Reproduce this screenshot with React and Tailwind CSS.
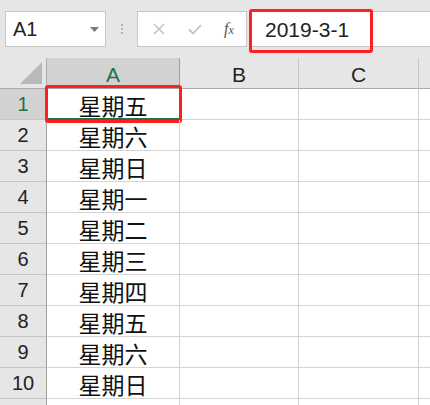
const rows = ['星期五', '星期六', '星期日', '星期一', '星期二', '星期三', '星期四', '星期五', '星期六', '星期日', ''];

const sans = { fontFamily: '"Liberation Sans", Arial, sans-serif' };

export default function App() {
  return (
    <div className="w-[430px] h-[405px] overflow-hidden bg-white select-none" style={sans}>
      {/* Formula bar */}
      <div className="h-[58px] bg-[#e6e6e6] flex items-start pt-[11px] pl-[5px] relative">
        <div className="w-[101px] h-[36px] bg-white border border-[#c6c6c6] flex items-center pl-[7px] pr-[6px]">
          <span className="text-[20px] text-[#222] leading-none">A1</span>
          <svg className="ml-auto" width="9" height="5" viewBox="0 0 9 5">
            <path d="M0 0 H9 L4.5 5 Z" fill="#7a7a7a" />
          </svg>
        </div>
        <div className="w-[31px] h-[36px] flex flex-col items-center justify-center gap-[2px]">
          <span className="w-[2px] h-[2px] bg-[#b5b5b5]" />
          <span className="w-[2px] h-[2px] bg-[#b5b5b5]" />
          <span className="w-[2px] h-[2px] bg-[#b5b5b5]" />
        </div>
        <div className="w-[110px] h-[36px] bg-white border border-[#c6c6c6] flex items-center">
          <div className="w-[40px] flex justify-center pl-[2px]">
            <svg width="12" height="12" viewBox="0 0 12 12">
              <path d="M1 1 L11 11 M11 1 L1 11" stroke="#c3c3c3" strokeWidth="1.6" />
            </svg>
          </div>
          <div className="w-[34px] flex justify-center">
            <svg width="14" height="11" viewBox="0 0 14 11">
              <path d="M1 5.5 L5 9.5 L13 1" stroke="#c3c3c3" strokeWidth="1.8" fill="none" />
            </svg>
          </div>
          <div className="flex-1 flex justify-center">
            <span className="text-[16px] italic text-[#555] leading-none" style={{ fontFamily: '"Liberation Serif", serif' }}>
              f<span className="text-[12px]">x</span>
            </span>
          </div>
        </div>
        <div className="ml-[2px] flex-1 h-[36px] bg-white border-y border-[#c6c6c6] flex items-center pl-[16px] relative">
          <span className="text-[21px] text-[#222] leading-none">2019-3-1</span>
          <div className="absolute left-0 top-[-3px] w-[124px] h-[44px] border-[3px] border-[#ff1f1f] rounded-[3px]" />
        </div>
      </div>

      {/* Grid */}
      <div className="grid grid-cols-[47px_133px_119px_120px_1fr]">
        {/* header row */}
        <div className="h-[31px] bg-[#e6e6e6] border-r border-b border-[#ababab] relative">
          <svg className="absolute right-[4px] bottom-[4px]" width="22" height="22" viewBox="0 0 22 22">
            <path d="M22 0 V22 H0 Z" fill="#b9b9b9" />
          </svg>
        </div>
        <div className="h-[31px] bg-[#d2d2d2] border-r border-b border-[#9f9f9f] flex items-end justify-center pb-[1px]">
          <span className="text-[21px] leading-none text-[#217346] mb-[2px]">A</span>
        </div>
        <div className="h-[31px] bg-[#e6e6e6] border-r border-b border-r-[#c6c6c6] border-b-[#ababab] flex items-end justify-center">
          <span className="text-[21px] leading-none text-[#222] mb-[3px]">B</span>
        </div>
        <div className="h-[31px] bg-[#e6e6e6] border-r border-b border-r-[#c6c6c6] border-b-[#ababab] flex items-end justify-center">
          <span className="text-[21px] leading-none text-[#222] mb-[3px]">C</span>
        </div>
        <div className="h-[31px] bg-[#e6e6e6] border-b border-[#ababab]" />

        {rows.map((text, i) => (
          <Row key={i} n={text ? i + 1 : ''} text={text} selected={i === 0} />
        ))}
      </div>
    </div>
  );
}

function Row({ n, text, selected }) {
  return (
    <>
      <div
        className={`h-[31px] border-r border-b border-r-[#9f9f9f] border-b-[#c6c6c6] flex items-center justify-center ${
          selected ? 'bg-[#d2d2d2]' : 'bg-[#e6e6e6]'
        }`}
      >
        <span className={`text-[20px] leading-none ${selected ? 'text-[#217346]' : 'text-[#222]'}`}>{n}</span>
      </div>
      <div className="h-[31px] border-r border-b border-[#d4d4d4] flex items-center justify-center relative">
        <span
          className="text-[23px] leading-none text-[#111] mt-[2px]"
          style={{ fontFamily: '"Noto Sans CJK SC", "Noto Sans", sans-serif' }}
        >
          {text}
        </span>
        {selected && (
          <>
            <div className="absolute left-[-1px] right-[-1px] bottom-[-1px] h-[2px] bg-[#217346]" />
            <div className="absolute right-[-2px] bottom-[-3px] w-[4px] h-[4px] bg-[#217346]" />
            <div className="absolute left-[-2px] right-[-3px] top-[-4px] bottom-[-4px] border-[3px] border-[#ff1f1f] rounded-[3px]" />
          </>
        )}
      </div>
      <div className="h-[31px] border-r border-b border-[#d4d4d4]" />
      <div className="h-[31px] border-r border-b border-[#d4d4d4]" />
      <div className="h-[31px] border-b border-[#d4d4d4]" />
    </>
  );
}
